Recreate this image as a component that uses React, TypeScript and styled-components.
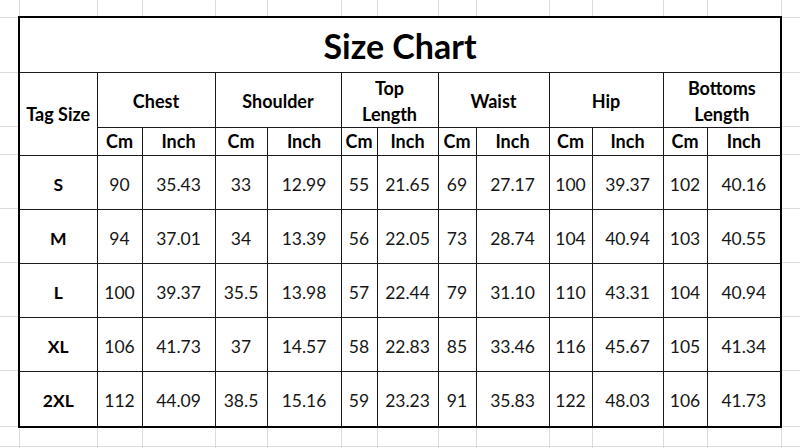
import React from 'react';
import styled, { createGlobalStyle } from 'styled-components';

const GlobalStyle = createGlobalStyle`
  html, body {
    margin: 0;
    padding: 0;
    background: #fff;
  }
  body {
    font-family: Lato, "Open Sans", "Liberation Sans", sans-serif;
    color: #111;
  }
`;

// spreadsheet gridlines behind the chart
const gridX = [19, 97, 142, 215, 267, 341, 377, 438, 476, 549, 592, 663, 707, 781];
const gridY = [17, 72, 126, 154, 208, 262, 316, 370, 426, 446];

const line = (dir: string, p: number) =>
  `linear-gradient(${dir}, transparent ${p}px, #dcdcdc ${p}px, #dcdcdc ${p + 1}px, transparent ${p + 1}px)`;

const gridBg = [
  ...gridX.map((x) => line('to right', x)),
  ...gridY.map((y) => line('to bottom', y)),
].join(', ');

const Sheet = styled.div`
  width: 800px;
  height: 448px;
  box-sizing: border-box;
  padding: 16px 18px 0 18px;
  background-color: #fff;
  background-image: ${gridBg};
  overflow: hidden;
`;

const Frame = styled.div`
  border: 2px solid #000;
  background: #fff;
  width: 760px;
`;

const Table = styled.table`
  width: 760px;
  border-collapse: collapse;
  border-style: hidden;
  table-layout: fixed;
`;

const Cell = styled.td<{ $h?: number }>`
  box-sizing: border-box;
  border: 1px solid #1a1a1a;
  padding: 0;
  text-align: center;
  vertical-align: middle;
  height: ${(p) => p.$h ?? 54}px;
  font-size: 17.5px;
  color: #161616;
`;

const TitleCell = styled(Cell)`
  font-size: 34px;
  font-weight: 700;
  color: #000;
  padding-top: 2px;
`;

const HeadCell = styled(Cell)`
  font-size: 18px;
  font-weight: 700;
  color: #000;
  line-height: 26px;
`;

const GroupCell = styled(HeadCell)`
  padding-top: 2px;
`;

const SizeCell = styled(Cell)`
  font-weight: 700;
  color: #000;
  padding-top: 4px;
`;

const NumCell = styled(Cell)`
  padding-top: 4px;
`;

const colWidths = [77, 45, 73, 52, 74, 36, 61, 38, 73, 43, 71, 44, 73];

const groups = [
  ['Chest'],
  ['Shoulder'],
  ['Top', 'Length'],
  ['Waist'],
  ['Hip'],
  ['Bottoms', 'Length'],
];

const rows: [string, string[]][] = [
  ['S', ['90', '35.43', '33', '12.99', '55', '21.65', '69', '27.17', '100', '39.37', '102', '40.16']],
  ['M', ['94', '37.01', '34', '13.39', '56', '22.05', '73', '28.74', '104', '40.94', '103', '40.55']],
  ['L', ['100', '39.37', '35.5', '13.98', '57', '22.44', '79', '31.10', '110', '43.31', '104', '40.94']],
  ['XL', ['106', '41.73', '37', '14.57', '58', '22.83', '85', '33.46', '116', '45.67', '105', '41.34']],
  ['2XL', ['112', '44.09', '38.5', '15.16', '59', '23.23', '91', '35.83', '122', '48.03', '106', '41.73']],
];

export default function App() {
  return (
    <>
      <GlobalStyle />
      <Sheet>
        <Frame>
          <Table>
            <colgroup>
              {colWidths.map((w, i) => (
                <col key={i} style={{ width: w }} />
              ))}
            </colgroup>
            <tbody>
              <tr>
                <TitleCell colSpan={13}>Size Chart</TitleCell>
              </tr>
              <tr>
                <HeadCell rowSpan={2} $h={54}>Tag Size</HeadCell>
                {groups.map((g) => (
                  <GroupCell key={g.join(' ')} colSpan={2} $h={54}>
                    {g.map((word, i) => (
                      <React.Fragment key={word}>
                        {i > 0 && <br />}
                        {word}
                      </React.Fragment>
                    ))}
                  </GroupCell>
                ))}
              </tr>
              <tr>
                {groups.map((g) => (
                  <React.Fragment key={g.join(' ')}>
                    <HeadCell $h={28}>Cm</HeadCell>
                    <HeadCell $h={28}>Inch</HeadCell>
                  </React.Fragment>
                ))}
              </tr>
              {rows.map(([size, values], r) => (
                <tr key={size}>
                  <SizeCell $h={r === rows.length - 1 ? 55 : 54}>{size}</SizeCell>
                  {values.map((v, i) => (
                    <NumCell key={i} $h={r === rows.length - 1 ? 55 : 54}>{v}</NumCell>
                  ))}
                </tr>
              ))}
            </tbody>
          </Table>
        </Frame>
      </Sheet>
    </>
  );
}
